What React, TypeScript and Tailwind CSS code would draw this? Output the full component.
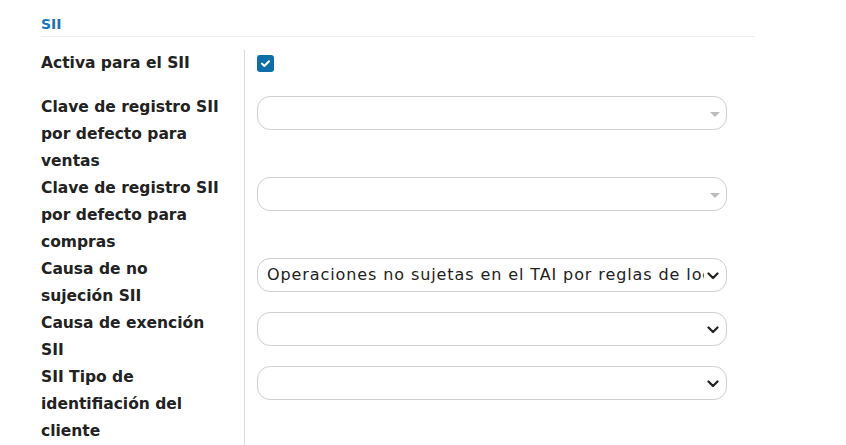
import React from "react";

const font = { fontFamily: '"DejaVu Sans", "Open Sans", sans-serif' };

function Caret() {
  return (
    <svg width="10" height="6" viewBox="0 0 10 6" className="absolute right-[6px] top-[15px]">
      <path d="M0 0 L10 0 L5 5 Z" fill="#bdbdbd" />
    </svg>
  );
}

function Chevron() {
  return (
    <svg width="12" height="8" viewBox="0 0 12 8" className="absolute right-[7px] top-[13px]">
      <path d="M1.5 1.5 L6 6 L10.5 1.5" fill="none" stroke="#222" strokeWidth="2.2" strokeLinecap="round" strokeLinejoin="round" />
    </svg>
  );
}

function SelectBox({ kind, text }: { kind: "caret" | "chevron"; text?: string }) {
  return (
    <div className="relative mt-[1.5px] h-[34px] w-[470px] rounded-[13px] border border-[#cfcfcf] bg-white">
      {text && (
        <div className="absolute left-[9px] right-[22px] top-0 h-full overflow-hidden whitespace-nowrap text-[16px] leading-[32px] tracking-[0.9px] text-[#222]">
          {text}
        </div>
      )}
      {kind === "caret" ? <Caret /> : <Chevron />}
    </div>
  );
}

function Row({ lines, h, children }: { lines: string[]; h: string; children: React.ReactNode }) {
  return (
    <div className={`flex ${h}`}>
      <div className="w-[204px] shrink-0 border-r border-[#dcdcdc] text-[15.5px] font-bold leading-[27px] text-[#222]">
        {lines.map((l, i) => (
          <div key={i}>{l}</div>
        ))}
      </div>
      <div className="pl-[12px]">{children}</div>
    </div>
  );
}

export default function App() {
  return (
    <div className="h-[445px] w-[846px] overflow-hidden bg-white" style={font}>
      <div className="ml-[41px] w-[714px]">
        <div className="border-b border-[#eeeeee] pb-[2px] pt-[14px] text-[14px] font-bold leading-[20px] text-[#1b74b6]">
          SII
        </div>
        <div className="mt-[13px]">
          <Row lines={["Activa para el SII"]} h="h-[44px]">
            <div className="mt-[5px] flex h-[17px] w-[17px] items-center justify-center rounded-[3px] bg-[#0f6ea8]">
              <svg width="9" height="7" viewBox="0 0 9 7">
                <path d="M1 3.6 L3.4 6 L8 1.2" fill="none" stroke="white" strokeWidth="2" strokeLinecap="round" strokeLinejoin="round" />
              </svg>
            </div>
          </Row>
          <Row lines={["Clave de registro SII", "por defecto para", "ventas"]} h="h-[81px]">
            <SelectBox kind="caret" />
          </Row>
          <Row lines={["Clave de registro SII", "por defecto para", "compras"]} h="h-[81px]">
            <SelectBox kind="caret" />
          </Row>
          <Row lines={["Causa de no", "sujeción SII"]} h="h-[54px]">
            <SelectBox kind="chevron" text="Operaciones no sujetas en el TAI por reglas de localización" />
          </Row>
          <Row lines={["Causa de exención", "SII"]} h="h-[54px]">
            <SelectBox kind="chevron" />
          </Row>
          <Row lines={["SII Tipo de", "identifiación del", "cliente"]} h="h-[81px]">
            <SelectBox kind="chevron" />
          </Row>
        </div>
      </div>
    </div>
  );
}
